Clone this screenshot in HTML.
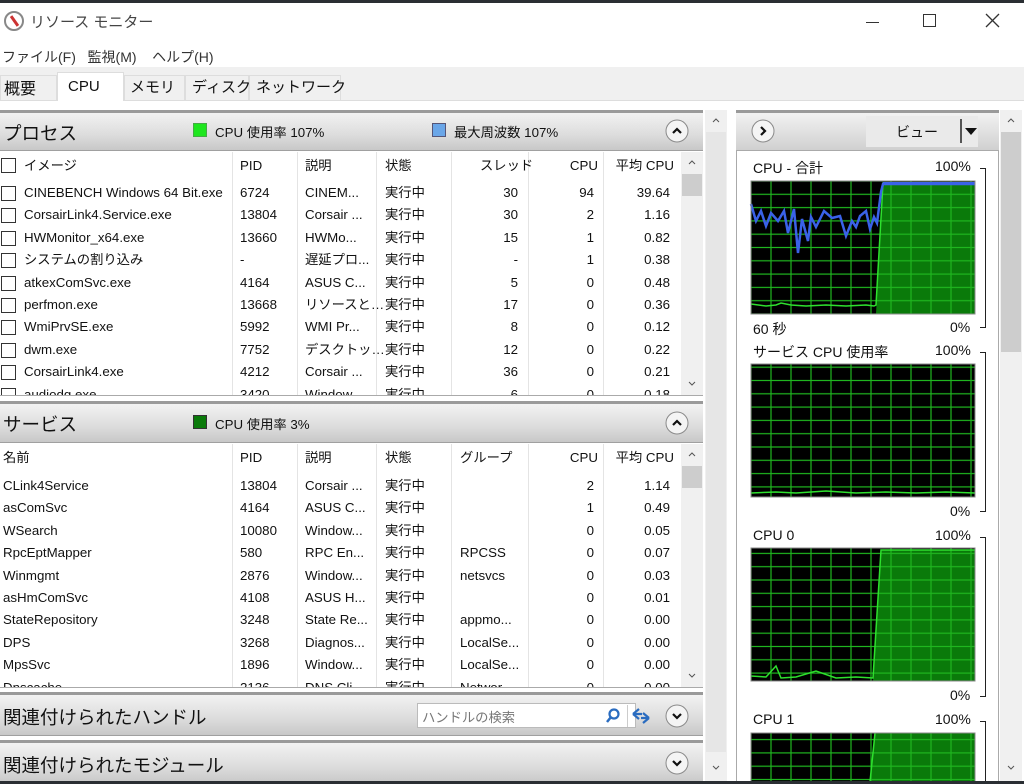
<!DOCTYPE html>
<html><head><meta charset="utf-8"><style>
*{margin:0;padding:0;box-sizing:border-box}
html,body{width:1024px;height:784px;overflow:hidden}
body{background:#fff;font-family:"Liberation Sans","Noto Sans CJK JP",sans-serif;font-size:13.3px;color:#111;position:relative}
.a{position:absolute}
.hdr{position:absolute;left:0;width:703px;background:linear-gradient(#f2f2f2,#dcdcdc 60%,#c8c8c8);border-top:3px solid #9a9a9a;border-bottom:1px solid #a0a0a0}
.hdr .t{position:absolute;left:3px;font-size:18.5px;color:#111}
.circ{position:absolute;width:24px;height:24px}
.list{position:absolute;left:0;width:703px;overflow:hidden;background:#fff}
.row{position:relative;height:22.4px;line-height:22.4px;white-space:nowrap}
.row span{position:absolute;top:0}
.cb{display:inline-block;width:15px;height:15px;border:1px solid #333;position:absolute;left:1px;top:4px}
.r{text-align:right}
.sb{position:absolute;background:#f0f0f0}
.sep{position:absolute;width:1px;background:#e4e4e4}
.lbl{position:absolute;font-size:14px;white-space:nowrap}
.bracket{position:absolute;width:6px;border-top:1px solid #222;border-right:1px solid #222;border-bottom:1px solid #222}
.tab{position:absolute;height:26px;border:1px solid #ddd;font-size:15px;white-space:nowrap;background:#f0f0f0;line-height:24px}
</style></head><body>
<svg width="0" height="0" style="position:absolute"><defs>
<symbol id="up" viewBox="0 0 24 24"><circle cx="12" cy="12" r="11" fill="#f4f4f4" stroke="#8a8a8a"/><path d="M8 14 L12 10 L16 14" fill="none" stroke="#111" stroke-width="2.2"/></symbol>
<symbol id="dn" viewBox="0 0 24 24"><circle cx="12" cy="12" r="11" fill="#f4f4f4" stroke="#8a8a8a"/><path d="M8 10 L12 14 L16 10" fill="none" stroke="#111" stroke-width="2.2"/></symbol>
<symbol id="rt" viewBox="0 0 24 24"><circle cx="12" cy="12" r="11" fill="#f4f4f4" stroke="#8a8a8a"/><path d="M10 8 L14 12 L10 16" fill="none" stroke="#111" stroke-width="2.2"/></symbol>
<symbol id="su" viewBox="0 0 10 10"><path d="M2 6 L5 3 L8 6" fill="none" stroke="#555" stroke-width="1"/></symbol>
<symbol id="sd" viewBox="0 0 10 10"><path d="M2 4 L5 7 L8 4" fill="none" stroke="#555" stroke-width="1"/></symbol>
</defs></svg>
<div class="a" style="left:0;top:0;width:1024px;height:3px;background:#2a2e33"></div>
<div class="a" style="left:4px;top:11px;width:20px;height:20px;border-radius:50%;border:2px solid #888;background:#fff"><div class="a" style="left:7px;top:2px;width:3px;height:12px;background:#c33;transform:rotate(-35deg)"></div></div>
<div class="a" style="left:30px;top:11px;font-size:15px;color:#444">リソース モニター</div>
<div class="a" style="left:866px;top:22px;width:13px;height:1px;background:#333"></div>
<div class="a" style="left:923px;top:14px;width:13px;height:13px;border:1px solid #333"></div>
<svg class="a" style="left:985px;top:13px" width="15" height="15"><path d="M1 1L14 14M14 1L1 14" stroke="#333" stroke-width="1.3"/></svg>
<div class="a" style="left:2px;top:47px;font-size:14px;color:#333;white-space:nowrap">ファイル(F)&nbsp;&nbsp;&nbsp;監視(M)&nbsp;&nbsp;&nbsp;&nbsp;ヘルプ(H)</div>
<div class="a" style="left:0;top:67px;width:1024px;height:34px;background:#f0f0f0;border-bottom:1px solid #ddd"></div>
<div class="tab" style="left:0;top:75px;width:57px;font-size:16px;padding-left:3px;line-height:27px">概要</div>
<div class="a" style="left:57px;top:72px;width:67px;height:30px;background:#fff;border:1px solid #ddd;border-bottom:none;font-size:15px;padding:5px 10px">CPU</div>
<div class="tab" style="left:124px;top:75px;width:61px;padding-left:5px">メモリ</div>
<div class="tab" style="left:185px;top:75px;width:64px;padding-left:6px">ディスク</div>
<div class="tab" style="left:249px;top:75px;width:92px;padding-left:6px">ネットワーク</div>
<div class="a" style="left:0;top:101px;width:1024px;height:9px;background:#fff"></div>

<div class="hdr" style="top:110px;height:41px"><div class="t" style="top:7px">プロセス</div>
<div class="a" style="left:193px;top:10px;width:14px;height:14px;background:#1ee61e;border:1px solid #4a4"></div>
<div class="a" style="left:215px;top:9px">CPU 使用率 107%</div>
<div class="a" style="left:432px;top:10px;width:14px;height:14px;background:#6aa6e8;border:1px solid #557"></div>
<div class="a" style="left:454px;top:9px">最大周波数 107%</div>
<svg class="circ" style="left:665px;top:6px"><use href="#up"/></svg></div>
<div class="list" style="top:152px;height:244px;border-bottom:1px solid #aaa">
<div class="sep" style="left:232px;top:0;height:244px"></div><div class="sep" style="left:297px;top:0;height:244px"></div><div class="sep" style="left:376px;top:0;height:244px"></div><div class="sep" style="left:451px;top:0;height:244px"></div><div class="sep" style="left:528px;top:0;height:244px"></div><div class="sep" style="left:603px;top:0;height:244px"></div>
<div class="row" style="height:30px;line-height:28px"><i class="cb" style="top:6px"></i><span style="left:24px">イメージ</span><span style="left:240px">PID</span><span style="left:305px">説明</span><span style="left:385px">状態</span><span style="left:480px">スレッド</span><span class="r" style="right:105px">CPU</span><span class="r" style="right:29px">平均 CPU</span></div>
<div class="row"><i class="cb"></i><span style="left:24px">CINEBENCH Windows 64 Bit.exe</span><span style="left:240px">6724</span><span style="left:305px">CINEM...</span><span style="left:385px">実行中</span><span class="r" style="right:185px">30</span><span class="r" style="right:109px">94</span><span class="r" style="right:33px">39.64</span></div>
<div class="row"><i class="cb"></i><span style="left:24px">CorsairLink4.Service.exe</span><span style="left:240px">13804</span><span style="left:305px">Corsair ...</span><span style="left:385px">実行中</span><span class="r" style="right:185px">30</span><span class="r" style="right:109px">2</span><span class="r" style="right:33px">1.16</span></div>
<div class="row"><i class="cb"></i><span style="left:24px">HWMonitor_x64.exe</span><span style="left:240px">13660</span><span style="left:305px">HWMo...</span><span style="left:385px">実行中</span><span class="r" style="right:185px">15</span><span class="r" style="right:109px">1</span><span class="r" style="right:33px">0.82</span></div>
<div class="row"><i class="cb"></i><span style="left:24px">システムの割り込み</span><span style="left:240px">-</span><span style="left:305px">遅延プロ...</span><span style="left:385px">実行中</span><span class="r" style="right:185px">-</span><span class="r" style="right:109px">1</span><span class="r" style="right:33px">0.38</span></div>
<div class="row"><i class="cb"></i><span style="left:24px">atkexComSvc.exe</span><span style="left:240px">4164</span><span style="left:305px">ASUS C...</span><span style="left:385px">実行中</span><span class="r" style="right:185px">5</span><span class="r" style="right:109px">0</span><span class="r" style="right:33px">0.48</span></div>
<div class="row"><i class="cb"></i><span style="left:24px">perfmon.exe</span><span style="left:240px">13668</span><span style="left:305px">リソースと…</span><span style="left:385px">実行中</span><span class="r" style="right:185px">17</span><span class="r" style="right:109px">0</span><span class="r" style="right:33px">0.36</span></div>
<div class="row"><i class="cb"></i><span style="left:24px">WmiPrvSE.exe</span><span style="left:240px">5992</span><span style="left:305px">WMI Pr...</span><span style="left:385px">実行中</span><span class="r" style="right:185px">8</span><span class="r" style="right:109px">0</span><span class="r" style="right:33px">0.12</span></div>
<div class="row"><i class="cb"></i><span style="left:24px">dwm.exe</span><span style="left:240px">7752</span><span style="left:305px">デスクトッ…</span><span style="left:385px">実行中</span><span class="r" style="right:185px">12</span><span class="r" style="right:109px">0</span><span class="r" style="right:33px">0.22</span></div>
<div class="row"><i class="cb"></i><span style="left:24px">CorsairLink4.exe</span><span style="left:240px">4212</span><span style="left:305px">Corsair ...</span><span style="left:385px">実行中</span><span class="r" style="right:185px">36</span><span class="r" style="right:109px">0</span><span class="r" style="right:33px">0.21</span></div>
<div class="row"><i class="cb"></i><span style="left:24px">audiodg.exe</span><span style="left:240px">3420</span><span style="left:305px">Window...</span><span style="left:385px">実行中</span><span class="r" style="right:185px">6</span><span class="r" style="right:109px">0</span><span class="r" style="right:33px">0.18</span></div>
<div class="sb" style="left:681px;top:0;width:22px;height:244px"><svg class="a" style="left:6px;top:6px" width="10" height="10"><use href="#su"/></svg><div class="a" style="left:1px;top:22px;width:20px;height:22px;background:#cdcdcd"></div><svg class="a" style="left:6px;top:226px" width="10" height="10"><use href="#sd"/></svg></div>
</div>

<div class="hdr" style="top:401px;height:42px"><div class="t" style="top:7px">サービス</div>
<div class="a" style="left:193px;top:11px;width:14px;height:14px;background:#0a7a0a;border:1px solid #333"></div>
<div class="a" style="left:215px;top:10px">CPU 使用率 3%</div>
<svg class="circ" style="left:665px;top:7px"><use href="#up"/></svg></div>
<div class="list" style="top:444px;height:244px;border-bottom:1px solid #aaa">
<div class="sep" style="left:232px;top:0;height:244px"></div><div class="sep" style="left:297px;top:0;height:244px"></div><div class="sep" style="left:376px;top:0;height:244px"></div><div class="sep" style="left:451px;top:0;height:244px"></div><div class="sep" style="left:528px;top:0;height:244px"></div><div class="sep" style="left:603px;top:0;height:244px"></div>
<div class="row" style="height:31px;line-height:28px"><span style="left:3px">名前</span><span style="left:240px">PID</span><span style="left:305px">説明</span><span style="left:385px">状態</span><span style="left:460px">グループ</span><span class="r" style="right:105px">CPU</span><span class="r" style="right:29px">平均 CPU</span></div>
<div class="row"><span style="left:3px">CLink4Service</span><span style="left:240px">13804</span><span style="left:305px">Corsair ...</span><span style="left:385px">実行中</span><span class="r" style="right:109px">2</span><span class="r" style="right:33px">1.14</span></div>
<div class="row"><span style="left:3px">asComSvc</span><span style="left:240px">4164</span><span style="left:305px">ASUS C...</span><span style="left:385px">実行中</span><span class="r" style="right:109px">1</span><span class="r" style="right:33px">0.49</span></div>
<div class="row"><span style="left:3px">WSearch</span><span style="left:240px">10080</span><span style="left:305px">Window...</span><span style="left:385px">実行中</span><span class="r" style="right:109px">0</span><span class="r" style="right:33px">0.05</span></div>
<div class="row"><span style="left:3px">RpcEptMapper</span><span style="left:240px">580</span><span style="left:305px">RPC En...</span><span style="left:385px">実行中</span><span style="left:460px">RPCSS</span><span class="r" style="right:109px">0</span><span class="r" style="right:33px">0.07</span></div>
<div class="row"><span style="left:3px">Winmgmt</span><span style="left:240px">2876</span><span style="left:305px">Window...</span><span style="left:385px">実行中</span><span style="left:460px">netsvcs</span><span class="r" style="right:109px">0</span><span class="r" style="right:33px">0.03</span></div>
<div class="row"><span style="left:3px">asHmComSvc</span><span style="left:240px">4108</span><span style="left:305px">ASUS H...</span><span style="left:385px">実行中</span><span class="r" style="right:109px">0</span><span class="r" style="right:33px">0.01</span></div>
<div class="row"><span style="left:3px">StateRepository</span><span style="left:240px">3248</span><span style="left:305px">State Re...</span><span style="left:385px">実行中</span><span style="left:460px">appmo...</span><span class="r" style="right:109px">0</span><span class="r" style="right:33px">0.00</span></div>
<div class="row"><span style="left:3px">DPS</span><span style="left:240px">3268</span><span style="left:305px">Diagnos...</span><span style="left:385px">実行中</span><span style="left:460px">LocalSe...</span><span class="r" style="right:109px">0</span><span class="r" style="right:33px">0.00</span></div>
<div class="row"><span style="left:3px">MpsSvc</span><span style="left:240px">1896</span><span style="left:305px">Window...</span><span style="left:385px">実行中</span><span style="left:460px">LocalSe...</span><span class="r" style="right:109px">0</span><span class="r" style="right:33px">0.00</span></div>
<div class="row"><span style="left:3px">Dnscache</span><span style="left:240px">2136</span><span style="left:305px">DNS Cli...</span><span style="left:385px">実行中</span><span style="left:460px">Networ...</span><span class="r" style="right:109px">0</span><span class="r" style="right:33px">0.00</span></div>
<div class="sb" style="left:681px;top:0;width:22px;height:244px"><svg class="a" style="left:6px;top:6px" width="10" height="10"><use href="#su"/></svg><div class="a" style="left:1px;top:22px;width:20px;height:22px;background:#cdcdcd"></div><svg class="a" style="left:6px;top:226px" width="10" height="10"><use href="#sd"/></svg></div>
</div>

<div class="hdr" style="top:692px;height:44px"><div class="t" style="top:9px">関連付けられたハンドル</div>
<div class="a" style="left:417px;top:8px;width:219px;height:25px;background:#fff;border:1px solid #bbb;color:#777;padding:3px 4px">ハンドルの検索</div>
<svg class="a" style="left:604px;top:12px" width="18" height="18"><circle cx="10" cy="7" r="4.5" fill="none" stroke="#2a6cc0" stroke-width="2.2"/><path d="M7 10 L3 15" stroke="#2a6cc0" stroke-width="2.5"/></svg>
<div class="a" style="left:627px;top:10px;width:1px;height:22px;background:#ccc"></div>
<svg class="a" style="left:630px;top:12px" width="22" height="18"><path d="M3 7 L9 2 M3 7 L9 12 M3 7 H12" stroke="#2a6cc0" stroke-width="2.2" fill="none"/><path d="M19 11 L13 6 M19 11 L13 16 M19 11 H11" stroke="#2a6cc0" stroke-width="2.2" fill="none"/></svg>
<svg class="circ" style="left:665px;top:9px"><use href="#dn"/></svg></div>
<div class="hdr" style="top:740px;height:44px"><div class="t" style="top:9px">関連付けられたモジュール</div>
<svg class="circ" style="left:665px;top:8px"><use href="#dn"/></svg></div>

<div class="sb" style="left:705px;top:110px;width:22px;height:672px;background:#f0f0f0"><svg class="a" style="left:6px;top:6px" width="10" height="10"><use href="#su"/></svg><div class="a" style="left:1px;top:22px;width:20px;height:620px;background:#e6e6e6"></div><svg class="a" style="left:6px;top:652px" width="10" height="10"><use href="#sd"/></svg></div>
<div class="a" style="left:727px;top:110px;width:9px;height:672px;background:#fff"></div>

<div class="a" style="left:736px;top:110px;width:263px;height:672px;border:1px solid #aaa;background:#fff"></div>
<div class="a" style="left:736px;top:110px;width:263px;height:41px;background:linear-gradient(#f2f2f2,#d0d0d0);border-top:3px solid #9a9a9a;border-bottom:1px solid #aaa">
<svg class="circ" style="left:15px;top:6px"><use href="#rt"/></svg>
<div class="a" style="left:130px;top:3px;width:112px;height:31px;background:#eaeaea;font-size:14px;padding:6px 0 0 30px">ビュー</div>
<div class="a" style="left:224px;top:6px;width:2px;height:24px;background:#555"></div>
<svg class="a" style="left:229px;top:15px" width="12" height="8"><path d="M0 0H12L6 7Z" fill="#111"/></svg></div>
<div class="sb" style="left:1000px;top:110px;width:22px;height:672px"><svg class="a" style="left:6px;top:6px" width="10" height="10"><use href="#su"/></svg><div class="a" style="left:1px;top:22px;width:20px;height:220px;background:#cdcdcd"></div><svg class="a" style="left:6px;top:652px" width="10" height="10"><use href="#sd"/></svg></div>

<svg class="a" style="left:736px;top:151px" width="263" height="631">
<defs><pattern id="g" x="15" y="30" width="20" height="13.3" patternUnits="userSpaceOnUse"><rect width="20" height="13.3" fill="none" stroke="#1fb61f" stroke-width="1.2"/></pattern></defs>
<rect x="15" y="30" width="224" height="133" fill="#000"/>
<polygon points="140,163 147,32 239,32 239,163" fill="#0a7a0a"/>
<rect x="15" y="30" width="224" height="133" fill="url(#g)"/>
<polyline points="15,153 30,155 40,154 45,152 55,154 70,155 90,154 110,155 130,154 138,155 140,154 147,32 239,32" fill="none" stroke="#2ee02e" stroke-width="1.5"/>
<polyline points="15,53 20,70 25,60 30,75 35,62 42,70 48,60 52,82 58,58 62,102 66,68 72,90 75,66 80,76 88,60 96,67 104,65 110,85 116,70 120,76 124,65 130,60 134,78 138,66 141,72 145,41 147,33 239,33" fill="none" stroke="#3a62e8" stroke-width="2.5"/>
<rect x="147" y="31" width="92" height="3" fill="#3a62e8"/>
<rect x="15" y="30" width="224" height="133" fill="none" stroke="#888"/>
<rect x="15" y="213" width="224" height="133" fill="#000"/>
<rect x="15" y="213" width="224" height="133" fill="url(#g)"/>
<polyline points="15,342 40,341 60,342 90,340 120,342 150,341 180,342 210,341 239,342" fill="none" stroke="#2ee02e" stroke-width="1.5"/>
<rect x="15" y="213" width="224" height="133" fill="none" stroke="#888"/>
<rect x="15" y="397" width="224" height="133" fill="#000"/>
<polygon points="137,530 145,399 239,399 239,530" fill="#0a7a0a"/>
<rect x="15" y="397" width="224" height="133" fill="url(#g)"/>
<polyline points="15,525 30,526 40,515 45,527 60,526 80,520 100,527 120,526 137,527 145,399 239,399" fill="none" stroke="#2ee02e" stroke-width="1.5"/>
<rect x="15" y="397" width="224" height="133" fill="none" stroke="#888"/>
<rect x="15" y="582" width="224" height="60" fill="#000"/>
<polygon points="134,631 139,582 239,582 239,631" fill="#0a7a0a"/>
<rect x="15" y="582" width="224" height="60" fill="url(#g)"/>
<polyline points="134,631 139,582" stroke="#2ee02e" stroke-width="1.5"/>
<rect x="15" y="582" width="224" height="60" fill="none" stroke="#888"/>
</svg>
<div class="lbl" style="left:753px;top:158px">CPU - 合計</div><div class="lbl" style="left:935px;top:158px">100%</div>
<div class="bracket" style="left:980px;top:168px;height:160px"></div>
<div class="lbl" style="left:753px;top:319px">60 秒</div><div class="lbl" style="left:950px;top:319px">0%</div>
<div class="lbl" style="left:753px;top:342px">サービス CPU 使用率</div><div class="lbl" style="left:935px;top:342px">100%</div>
<div class="bracket" style="left:980px;top:352px;height:160px"></div>
<div class="lbl" style="left:950px;top:503px">0%</div>
<div class="lbl" style="left:753px;top:527px">CPU 0</div><div class="lbl" style="left:935px;top:527px">100%</div>
<div class="bracket" style="left:980px;top:537px;height:160px"></div>
<div class="lbl" style="left:950px;top:687px">0%</div>
<div class="lbl" style="left:753px;top:711px">CPU 1</div><div class="lbl" style="left:935px;top:711px">100%</div>
<div class="bracket" style="left:980px;top:721px;height:60px;border-bottom:none"></div>
<div class="a" style="left:0;top:781px;width:1024px;height:3px;background:#2a2e33"></div>
</body></html>
